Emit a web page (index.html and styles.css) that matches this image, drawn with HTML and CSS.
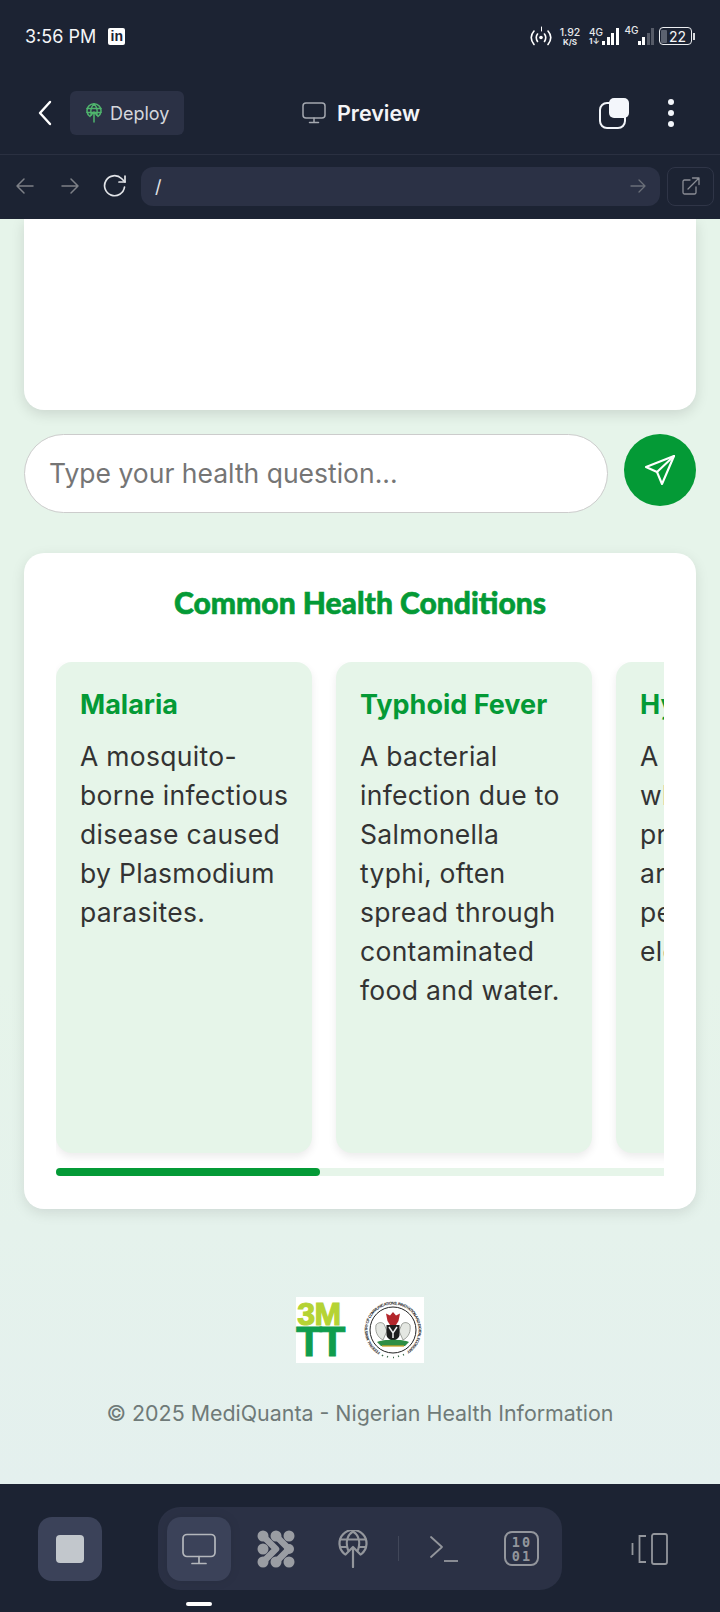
FILE: index.html
```html
<!DOCTYPE html>
<html lang="en">
<head>
    <meta charset="UTF-8">
    <meta name="viewport" content="width=device-width, initial-scale=1.0">
    <title>MediQuanta - Preview</title>
    <link rel="stylesheet" href="styles.css">
</head>
<body>
    <div class="app">
        <header class="top-bar">
            <div class="status-bar">
                <span class="time">3:56 PM</span>
                <span class="linkedin">in</span>
                <div class="status-icons">
                    <svg class="hotspot" width="22" height="20" viewBox="0 0 22 20" fill="none" stroke="#fff" stroke-width="1.6" stroke-linecap="round">
                        <path d="M4 5C0.500 9 0.500 14 4 18.500M7.500 8C6 10 6 13 7.500 15.500M14.500 8C16 10 16 13 14.500 15.500M18 5C21.500 9 21.500 14 18 18.500"/>
                        <circle cx="11" cy="11.500" r="1.800" fill="#fff" stroke="none"/>
                        <path d="M11.500 1V5" stroke-width="1"/>
                    </svg>
                    <div class="speed"><span>1.92</span><span class="speed-unit">K/S</span></div>
                    <div class="net">
                        <div class="net-label"><span>4G</span><span class="net-arrows">1↓</span></div>
                        <div class="bars">
                            <i class="bar bar-1"></i><i class="bar bar-2"></i><i class="bar bar-3"></i><i class="bar bar-4"></i>
                        </div>
                    </div>
                    <div class="net net-second">
                        <div class="net-label net-label-top"><span>4G</span></div>
                        <div class="bars">
                            <i class="bar bar-1"></i><i class="bar bar-2"></i><i class="bar bar-3 dim"></i><i class="bar bar-4 dim"></i>
                        </div>
                    </div>
                    <div class="battery">
                        <i class="battery-level"></i>
                        <span>22</span>
                    </div>
                    <i class="battery-tip"></i>
                </div>
            </div>

            <div class="tool-bar">
                <svg class="back" width="16" height="26" viewBox="0 0 16 26" fill="none" stroke="#fff" stroke-width="2.4" stroke-linecap="round" stroke-linejoin="round">
                    <path d="M13 2L3 13L13 24"/>
                </svg>
                <div class="deploy">
                    <svg width="16" height="20" viewBox="0 0 16 20" fill="none" stroke="#4fb56d" stroke-width="1.500" stroke-linecap="round" stroke-linejoin="round">
                        <path d="M4 13.500A7 7 0 1 1 12 13.500"/>
                        <path d="M1 5.500H15M1 9.500H15M8 1C4.500 4 4.500 9 5.500 12M8 1C11.500 4 11.500 9 10.500 12"/>
                        <path d="M8 19V9M4.500 12.500L8 9L11.500 12.500"/>
                    </svg>
                    <span>Deploy</span>
                </div>
                <div class="preview-title">
                    <svg width="24" height="22" viewBox="0 0 24 22" fill="none" stroke="#a4a8b0" stroke-width="1.500" stroke-linecap="round">
                        <rect x="1" y="1" width="22" height="15" rx="3"/>
                        <path d="M12 16V20M7.500 20.500H16.500"/>
                    </svg>
                    <span>Preview</span>
                </div>
                <div class="tool-actions">
                    <svg width="32" height="32" viewBox="0 0 32 32" fill="none">
                        <rect x="2" y="6" width="25" height="25" rx="7" stroke="#f3f6fb" stroke-width="2"/>
                        <rect x="11" y="1" width="20" height="20" rx="5" fill="#f3f6fb"/>
                    </svg>
                    <div class="more-dots"><i></i><i></i><i></i></div>
                </div>
            </div>

            <div class="url-bar">
                <svg class="nav-icon" width="20" height="18" viewBox="0 0 20 18" fill="none" stroke="#7d8087" stroke-width="1.500" stroke-linecap="round" stroke-linejoin="round">
                    <path d="M18 9H2M9 2L2 9L9 16"/>
                </svg>
                <svg class="nav-icon" width="20" height="18" viewBox="0 0 20 18" fill="none" stroke="#7d8087" stroke-width="1.500" stroke-linecap="round" stroke-linejoin="round">
                    <path d="M2 9H18M11 2L18 9L11 16"/>
                </svg>
                <svg class="nav-icon" width="24" height="24" viewBox="0 0 24 24" fill="none" stroke="#e2e4e8" stroke-width="1.700" stroke-linecap="round" stroke-linejoin="round">
                    <path d="M21.500 13A10 10 0 1 1 18.500 4.500L22 8"/>
                    <path d="M22 2V8H16"/>
                </svg>
                <div class="url-field">
                    <span>/</span>
                    <svg width="16" height="14" viewBox="0 0 16 14" fill="none" stroke="#6b6f79" stroke-width="1.300" stroke-linecap="round" stroke-linejoin="round">
                        <path d="M1 7H15M9 1L15 7L9 13"/>
                    </svg>
                </div>
                <div class="open-btn">
                    <svg width="18" height="18" viewBox="0 0 18 18" fill="none" stroke="#8a8d95" stroke-width="1.300" stroke-linecap="round" stroke-linejoin="round">
                        <path d="M8 3H2.500A1.500 1.500 0 0 0 1 4.500V15.500A1.500 1.500 0 0 0 2.500 17H12.500A1.500 1.500 0 0 0 14 15.500V10"/>
                        <path d="M6 12L17 1M10.500 1H17V7.500"/>
                    </svg>
                </div>
            </div>
        </header>

        <main class="page">
            <div class="chat-card"></div>

            <div class="chat-input-row">
                <input class="chat-input" type="text" placeholder="Type your health question...">
                <div class="send-btn">
                    <svg width="32" height="32" viewBox="0 0 32 32" fill="none" stroke="#fff" stroke-width="2.100" stroke-linejoin="round" stroke-linecap="round">
                        <path d="M30 2L2 13L13 18L18 30Z"/>
                        <path d="M30 2L13 18"/>
                    </svg>
                </div>
            </div>

            <section class="conditions">
                <h2>Common Health Conditions</h2>
                <div class="conditions-scroll">
                    <article class="condition">
                        <h3>Malaria</h3>
                        <p>A mosquito-borne infectious disease caused by Plasmodium parasites.</p>
                    </article>
                    <article class="condition">
                        <h3>Typhoid Fever</h3>
                        <p>A bacterial infection due to Salmonella typhi, often spread through contaminated food and water.</p>
                    </article>
                    <article class="condition">
                        <h3>Hypertension</h3>
                        <p>A condition in which blood pressure in the arteries is persistently elevated.</p>
                    </article>
                </div>
                <div class="scroll-track"><div class="scroll-thumb"></div></div>
            </section>

            <footer class="page-footer">
                <div class="partner-logos">
                    <div class="logo-3mtt">
                        <span class="logo-3m">3M</span>
                        <span class="logo-tt">TT</span>
                    </div>
                    <svg class="seal" width="62" height="62" viewBox="0 0 62 62" fill="none">
                        <defs>
                            <path id="seal-ring" d="M18.250 53.080A25.500 25.500 0 1 1 43.750 53.080"/>
                        </defs>
                        <circle cx="31" cy="31" r="23" stroke="#222" stroke-width="1"/>
                        <text class="seal-text"><textPath href="#seal-ring" textLength="132" lengthAdjust="spacing">FEDERAL MINISTRY OF COMMUNICATIONS, INNOVATION AND DIGITAL ECONOMY</textPath></text>
                        <path d="M20 56L21 57M25 57.500L26 58M31 58.500H32M36 57.500L37 57M41 56L42 55.500" stroke="#3b6b4a" stroke-width="1.500"/>
                        <path d="M14 26C13 32 15 38 21 41L25 32L22 25C20 23 16 23 14 26Z" fill="#e4e7e2" stroke="#7b7f78" stroke-width="0.700"/>
                        <path d="M48 26C49 32 47 38 41 41L37 32L40 25C42 23 46 23 48 26Z" fill="#e4e7e2" stroke="#7b7f78" stroke-width="0.700"/>
                        <path d="M31 13L34 16.500L38 14.500L36.500 22L34 26H28L25.500 22L24 14.500L28 16.500Z" fill="#b3262b"/>
                        <path d="M24.500 26H37.500V36C37.500 39 33.500 41 31 42C28.500 41 24.500 39 24.500 36Z" fill="#1d1d1d"/>
                        <path d="M27 28L31 34L35 28M31 34V39" stroke="#f0f0f0" stroke-width="1.500"/>
                        <path d="M15 43C21 40 41 40 47 43L43 47H19Z" fill="#2f8f45"/>
                        <path d="M20 47H42" stroke="#c9a227" stroke-width="1.300"/>
                    </svg>
                </div>
                <p>© 2025 MediQuanta - Nigerian Health Information</p>
            </footer>
        </main>

        <nav class="bottom-bar">
            <div class="bottom-row">
                <div class="stop-btn"><i></i></div>
                <div class="segments">
                    <div class="segment active">
                        <svg width="36" height="32" viewBox="0 0 36 32" fill="none" stroke="#b4b7bc" stroke-width="1.700" stroke-linecap="round">
                            <rect x="2" y="1.500" width="32" height="22" rx="4"/>
                            <path d="M18 23.500V30M11 30.500H25"/>
                        </svg>
                    </div>
                    <div class="segment">
                        <svg width="38" height="38" viewBox="0 0 38 38" fill="#9a9da3">
                            <g fill="none" stroke="#9a9da3" stroke-width="6.500" stroke-linejoin="round" stroke-linecap="round">
                                <path d="M6 6L19 19L6 32"/>
                                <path d="M19 6L32 19L19 32"/>
                            </g>
                            <circle cx="6" cy="6" r="5.500"/><circle cx="19" cy="6" r="5.500"/><circle cx="32" cy="6" r="5.500"/>
                            <circle cx="6" cy="19" r="5.500"/><circle cx="32" cy="19" r="5"/>
                            <circle cx="6" cy="32" r="5.500"/><circle cx="19" cy="32" r="5.500"/><circle cx="32" cy="32" r="5.500"/>
                        </svg>
                    </div>
                    <div class="segment">
                        <svg width="30" height="38" viewBox="0 0 30 38" fill="none" stroke="#93969c" stroke-width="2.200" stroke-linecap="round" stroke-linejoin="round">
                            <path d="M6.500 24A13.500 13.500 0 1 1 23.500 24"/>
                            <path d="M2 9.500H28M2 17H8M22 17H28M15 1.500C8 6 8 14 10 20M15 1.500C22 6 22 14 20 20"/>
                            <path d="M15 37V17M7.500 24.500L15 17L22.500 24.500"/>
                        </svg>
                    </div>
                    <i class="segment-divider"></i>
                    <div class="segment">
                        <svg width="30" height="28" viewBox="0 0 30 28" fill="none" stroke="#93969c" stroke-width="1.800" stroke-linecap="round" stroke-linejoin="round">
                            <path d="M2 2L13 12L2 22"/>
                            <path d="M15 26H29" stroke-linecap="butt"/>
                        </svg>
                    </div>
                    <div class="segment">
                        <div class="binary"><span>10</span><span>01</span></div>
                    </div>
                </div>
                <svg class="panel-icon" width="38" height="32" viewBox="0 0 38 32" fill="none" stroke="#93969c" stroke-width="1.800">
                    <path d="M1.500 10V22"/>
                    <path d="M15 3H8.500V29H15"/>
                    <rect x="21" y="1" width="15" height="30" rx="2"/>
                </svg>
            </div>
            <div class="home-indicator"></div>
        </nav>
    </div>
</body>
</html>
```

FILE: styles.css
```css
* {
    margin: 0;
    padding: 0;
    box-sizing: border-box;
}

body {
    width: 720px;
    height: 1612px;
    overflow: hidden;
    font-family: 'Inter', 'Liberation Sans', sans-serif;
    background-color: #1c2333;
}

.app {
    height: 1612px;
    display: flex;
    flex-direction: column;
}

/* top */
.top-bar {
    height: 219px;
    background-color: #1c2333;
    color: white;
    flex-shrink: 0;
}

.status-bar {
    height: 72px;
    display: flex;
    align-items: center;
    padding: 0 25px;
}

.time {
    font-size: 18px;
    color: #f4f5f7;
}

.linkedin {
    width: 17px;
    height: 17px;
    margin-left: 12px;
    background-color: white;
    border-radius: 2px;
    color: #1c2333;
    font: bold 14px/17px 'Liberation Sans', sans-serif;
    text-align: center;
}

.status-icons {
    margin-left: auto;
    display: flex;
    align-items: center;
}

.speed {
    width: 20px;
    display: flex;
    flex-direction: column;
    align-items: center;
    margin-left: 8px;
    font-size: 10.500px;
    line-height: 11px;
    font-weight: 500;
    color: #e8e9ec;
}

.speed-unit {
    font-size: 8px;
    line-height: 8px;
    font-weight: 700;
}

.net {
    display: flex;
    align-items: flex-end;
    margin-left: 9px;
    height: 18px;
}

.net-second {
    margin-left: 6px;
}

.net-label {
    width: 13px;
    display: flex;
    flex-direction: column;
    font-size: 10px;
    line-height: 10px;
    font-weight: 500;
    color: #e8e9ec;
}

.net-label-top {
    align-self: flex-start;
    margin-top: -2px;
}

.net-arrows {
    font-size: 8px;
    line-height: 8px;
    font-weight: 700;
}

.bars {
    display: flex;
    align-items: flex-end;
    gap: 1.500px;
}

.bar {
    width: 3px;
    background-color: white;
}

.bar.dim {
    background-color: #565b68;
}

.bar-1 { height: 4px; }
.bar-2 { height: 8px; }
.bar-3 { height: 12px; }
.bar-4 { height: 17px; }

.battery {
    width: 33px;
    height: 18px;
    margin-left: 5px;
    border: 1.500px solid #eceef1;
    border-radius: 4px;
    display: flex;
    align-items: center;
    font-size: 14px;
    color: #f4f5f7;
    padding-left: 1px;
}

.battery-level {
    width: 6px;
    height: 13px;
    background-color: #5c6270;
    border-radius: 1px;
    margin-right: 2px;
}

.battery-tip {
    width: 2px;
    height: 7px;
    margin-left: 1px;
    background-color: #d8dade;
}

.tool-bar {
    height: 83px;
    display: flex;
    align-items: center;
    padding-left: 37px;
    border-bottom: 1px solid #2a3041;
}

.deploy {
    width: 114px;
    height: 44px;
    margin-left: 17px;
    background-color: #2b3145;
    border-radius: 6px;
    display: flex;
    align-items: center;
    gap: 8px;
    padding-left: 16px;
    font-size: 18px;
    color: #d5d7dc;
}

.preview-title {
    display: flex;
    align-items: center;
    gap: 11px;
    margin-left: 118px;
    font-size: 21.500px;
    font-weight: 600;
    color: #f4f5f7;
}

.tool-actions {
    margin-left: auto;
    display: flex;
    align-items: center;
    padding-right: 46px;
    gap: 38px;
}

.more-dots {
    display: flex;
    flex-direction: column;
    gap: 5px;
}

.more-dots i {
    width: 6px;
    height: 6px;
    border-radius: 50%;
    background-color: #f3f6fb;
}

.url-bar {
    height: 64px;
    display: flex;
    align-items: center;
    padding: 0 6px 2px 15px;
}

.nav-icon {
    margin-right: 23px;
    flex-shrink: 0;
}

.nav-icon:nth-child(1) {
    margin-right: 25px;
}

.nav-icon:nth-child(3) {
    margin-right: 14px;
}

.url-field {
    flex: 1;
    height: 39px;
    background-color: #2b3145;
    border-radius: 12px;
    display: flex;
    align-items: center;
    justify-content: space-between;
    padding: 0 14px;
    font-size: 18px;
    color: #e2e4e8;
}

.open-btn {
    width: 47px;
    height: 39px;
    margin-left: 7px;
    border: 1px solid #2f3547;
    border-radius: 8px;
    display: flex;
    align-items: center;
    justify-content: center;
}

/* page */
.page {
    flex: 1;
    overflow: hidden;
    padding: 0 24px;
    background: linear-gradient(180deg, #e6f4ea 60%, #e4f0ee 100%);
}

.chat-card {
    height: 191px;
    background-color: white;
    border-radius: 0 0 20px 20px;
    box-shadow: 0 4px 14px rgba(0, 0, 0, 0.12);
}

.chat-input-row {
    display: flex;
    align-items: flex-start;
    gap: 16px;
    margin-top: 24px;
}

.chat-input {
    flex: 1;
    height: 79px;
    border: 1px solid #cccccc;
    border-radius: 39.500px;
    padding: 0 24px 2px;
    background-color: white;
    font-family: 'Inter', sans-serif;
    font-size: 26.500px;
    outline: none;
}

.chat-input::placeholder {
    color: #757575;
}

.send-btn {
    width: 72px;
    height: 72px;
    border-radius: 50%;
    background-color: #049a36;
    display: flex;
    align-items: center;
    justify-content: center;
}

.conditions {
    margin-top: 40px;
    height: 656px;
    background-color: white;
    border-radius: 20px;
    padding: 32px;
    box-shadow: 0 4px 14px rgba(0, 0, 0, 0.1);
}

.conditions h2 {
    height: 42px;
    margin-bottom: 35px;
    text-align: center;
    font-family: 'Lato', sans-serif;
    font-size: 30px;
    line-height: 34px;
    font-weight: 900;
    color: #049a36;
    -webkit-text-stroke: 0.600px #049a36;
}

.conditions-scroll {
    display: flex;
    gap: 24px;
    height: 506px;
    overflow: hidden;
    padding-bottom: 15px;
}

.condition {
    flex: 0 0 256px;
    height: 491px;
    background-color: #e6f5e9;
    border-radius: 16px;
    padding: 24px 18px 24px 24px;
    box-shadow: 0 4px 8px rgba(0, 0, 0, 0.08);
}

.condition h3 {
    font-size: 27px;
    line-height: 38px;
    font-weight: 700;
    color: #049a36;
    margin-bottom: 13px;
}

.condition p {
    font-size: 26.500px;
    line-height: 39px;
    letter-spacing: 0.300px;
    color: #333333;
}

.scroll-track {
    height: 8px;
    background-color: #e6f5e9;
    border-radius: 4px 0 0 4px;
}

.scroll-thumb {
    width: 264px;
    height: 8px;
    background-color: #049a36;
    border-radius: 4px;
}

.page-footer {
    margin-top: 88px;
    display: flex;
    flex-direction: column;
    align-items: center;
}

.partner-logos {
    width: 128px;
    height: 66px;
    background-color: white;
    display: flex;
    align-items: center;
    justify-content: space-between;
}

.logo-3mtt {
    width: 46px;
    display: flex;
    flex-direction: column;
    align-self: flex-start;
    padding-top: 6px;
    font-family: 'Liberation Sans', sans-serif;
    font-weight: bold;
    text-align: center;
}

.logo-3m {
    font-size: 32px;
    line-height: 23px;
    letter-spacing: -0.500px;
    color: #b5d334;
    -webkit-text-stroke: 1.200px #b5d334;
}

.logo-tt {
    font-size: 43px;
    line-height: 31px;
    letter-spacing: -3px;
    color: #0f9d4d;
    -webkit-text-stroke: 0.800px #0f9d4d;
}

.seal-text {
    font-family: 'Liberation Sans', sans-serif;
    font-size: 4px;
    font-weight: bold;
    fill: #222;
}

.page-footer p {
    margin-top: 35px;
    font-size: 21.400px;
    line-height: 30px;
    color: #6f7a78;
}

/* bottom */
.bottom-bar {
    height: 128px;
    flex-shrink: 0;
    background-color: #1c2333;
    padding: 23px 0 0 38px;
    position: relative;
}

.bottom-row {
    display: flex;
    align-items: center;
}

.stop-btn {
    width: 64px;
    height: 64px;
    background-color: #3b4259;
    border-radius: 14px;
    display: flex;
    align-items: center;
    justify-content: center;
}

.stop-btn i {
    width: 28px;
    height: 28px;
    background-color: #c2c7cc;
    border-radius: 4px;
}

.segments {
    margin-left: 56px;
    height: 83px;
    padding: 0 9px;
    background-color: #2b3145;
    border-radius: 22px;
    display: flex;
    align-items: center;
    gap: 13px;
}

.segment {
    width: 64px;
    height: 64px;
    border-radius: 14px;
    display: flex;
    align-items: center;
    justify-content: center;
}

.segment.active {
    background-color: #3b4259;
    box-shadow: 0 0 12px rgba(0, 0, 0, 0.08);
}

.segment-divider {
    width: 1px;
    height: 25px;
    background-color: #414759;
}

.binary {
    width: 35px;
    height: 35px;
    border: 2px solid #93969c;
    border-radius: 8px;
    display: flex;
    flex-direction: column;
    align-items: center;
    justify-content: center;
    font-family: 'DejaVu Sans Mono', monospace;
    font-size: 13.500px;
    line-height: 14px;
    font-weight: bold;
    letter-spacing: 2px;
    padding-left: 2px;
    color: #93969c;
}

.panel-icon {
    margin-left: 69px;
}

.home-indicator {
    position: absolute;
    left: 186px;
    top: 118px;
    width: 26px;
    height: 4px;
    background-color: white;
    border-radius: 2px;
}
```
